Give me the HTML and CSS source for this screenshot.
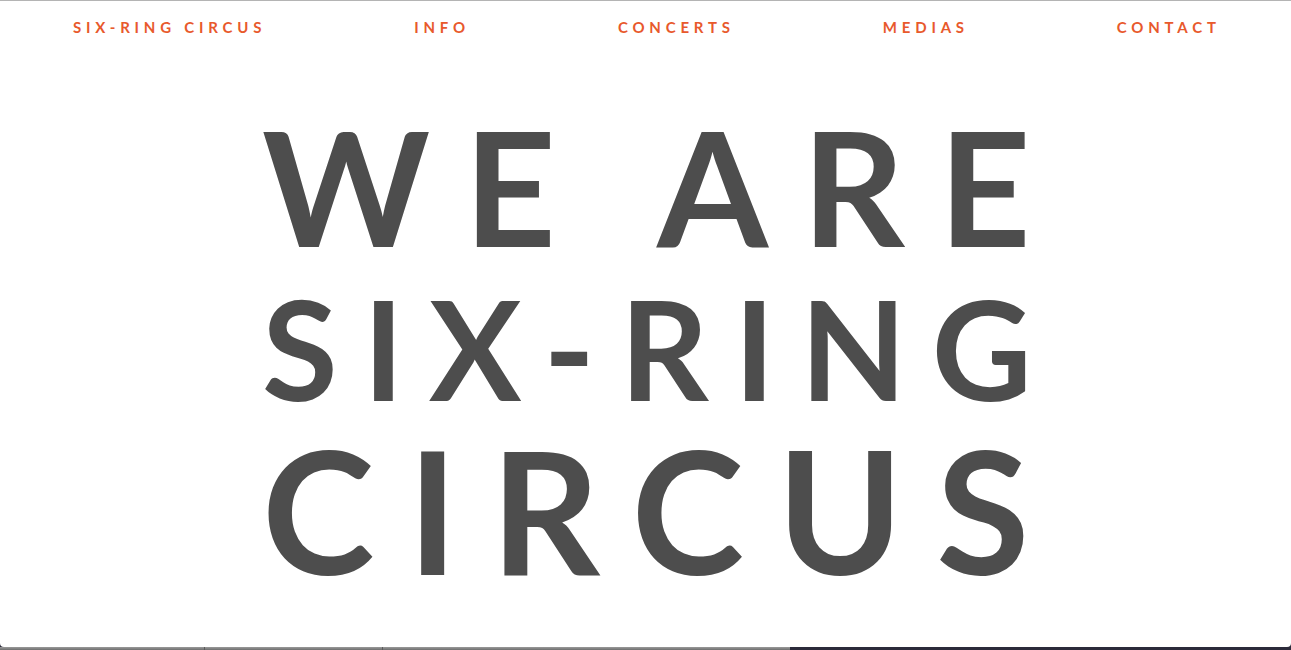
FILE: index.html
```html
<!DOCTYPE html>
<html lang="en">
<head>
<meta charset="utf-8">
<title>Six-Ring Circus</title>
<link rel="stylesheet" href="styles.css">
</head>
<body>
<div class="window">
  <nav class="nav">
    <a class="nav-link" href="#">SIX-RING CIRCUS</a>
    <a class="nav-link" href="#">INFO</a>
    <a class="nav-link" href="#">CONCERTS</a>
    <a class="nav-link" href="#">MEDIAS</a>
    <a class="nav-link" href="#">CONTACT</a>
  </nav>
  <main class="hero">
    <h1 class="title">
      <span class="line line-1">WE ARE</span>
      <span class="line line-2">SIX-RING</span>
      <span class="line line-3">CIRCUS</span>
    </h1>
  </main>
</div>
<div class="dock">
  <div class="dock-left"><span class="seg seg-a"></span><span class="seg seg-b"></span><span class="seg seg-c"></span></div>
  <div class="dock-right"></div>
</div>
</body>
</html>
```
FILE: styles.css
```css
* { box-sizing: border-box; }
html, body {
  margin: 0;
  padding: 0;
  height: 650px;
  overflow: hidden;
  background: #2b2a3a;
}
body {
  display: flex;
  flex-direction: column;
  font-family: "Lato", "Open Sans", sans-serif;
}
.window {
  height: 647px;
  background: #ffffff;
  border-top: 1px solid #b4b4b4;
  border-radius: 0 0 4px 4px;
  overflow: hidden;
}
.nav {
  display: flex;
  justify-content: space-between;
  padding: 19px 75px 0 73px;
}
.nav-link {
  display: block;
  color: #e8592c;
  text-decoration: none;
  font-size: 15px;
  line-height: 15px;
  font-weight: 700;
  letter-spacing: 4.8px;
  margin-right: -4.8px;
}
.hero {
  display: flex;
  justify-content: center;
  padding-top: 70px;
}
.title {
  margin: 0;
  width: 767px;
  color: #4d4d4d;
  font-weight: 700;
  display: flex;
  flex-direction: column;
}
.line {
  display: block;
  white-space: nowrap;
}
.line-1 {
  font-size: 160px;
  line-height: 160px;
  letter-spacing: 33.8px;
}
.line-2 {
  font-size: 138px;
  line-height: 138px;
  letter-spacing: 25.2px;
  margin-top: 14px;
}
.line-3 {
  font-size: 170px;
  line-height: 170px;
  letter-spacing: 33px;
  margin-top: 7px;
}
.dock {
  height: 3px;
  display: flex;
}
.dock-left {
  width: 790px;
  display: flex;
  background: linear-gradient(#9a9a9a, #6e6e6e);
}
.seg { display: block; height: 100%; border-right: 1px solid #5c5c5c; }
.seg-a { width: 205px; }
.seg-b { width: 178px; }
.seg-c { flex: 1; border-right: none; }
.dock-right {
  flex: 1;
  background: #2b2a3a;
}
```
